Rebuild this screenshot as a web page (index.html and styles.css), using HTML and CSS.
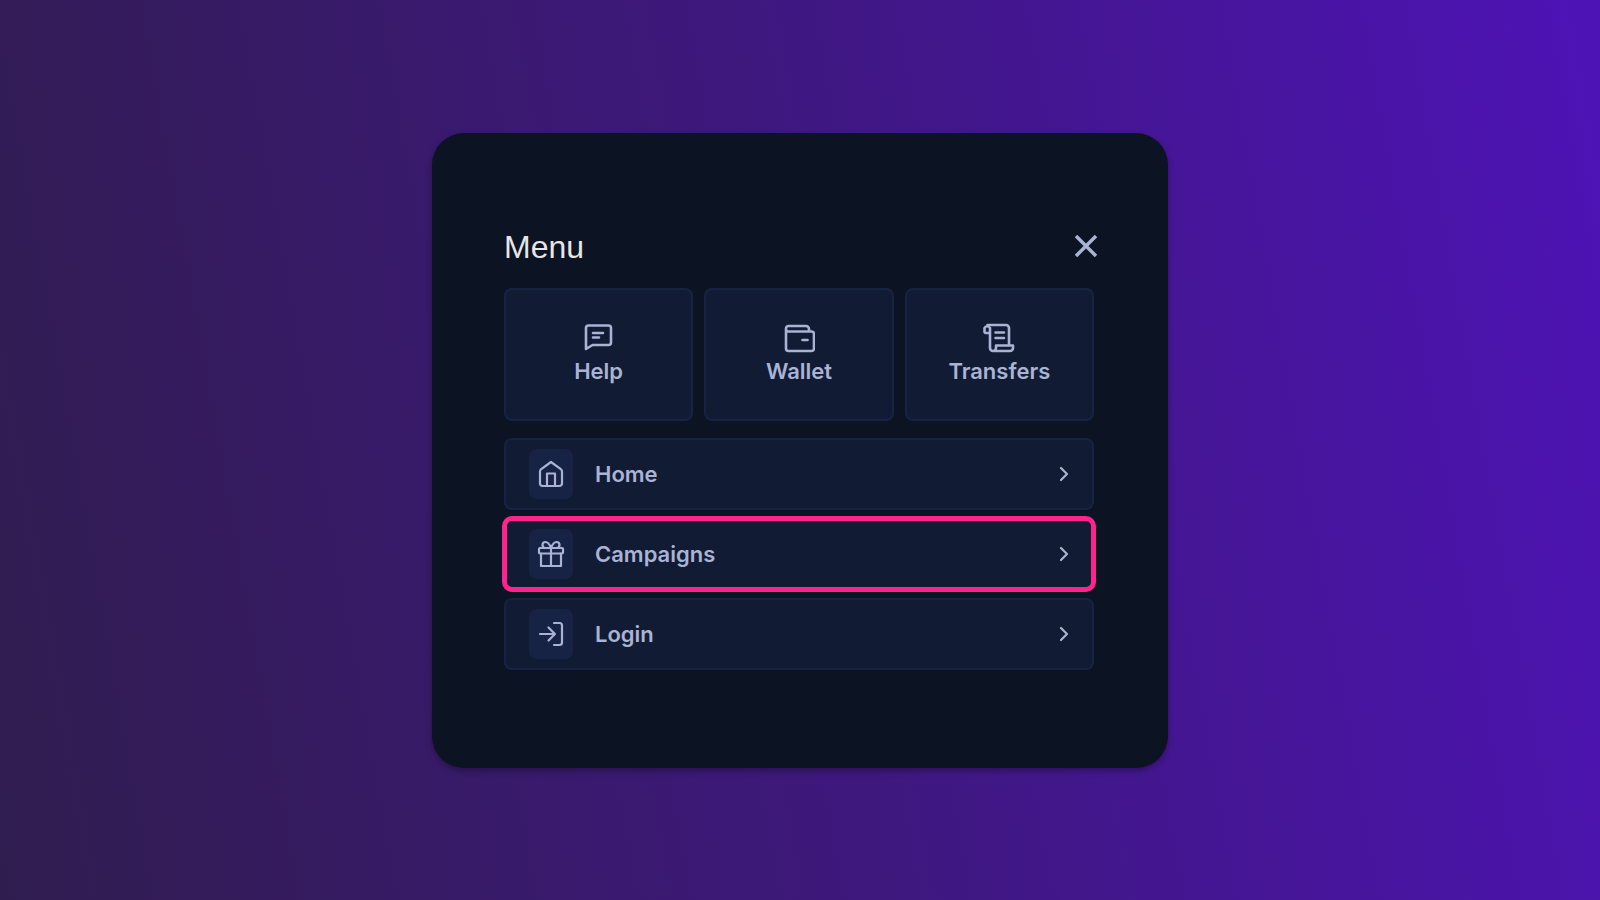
FILE: index.html
```html
<!DOCTYPE html>
<html lang="en">
<head>
    <meta charset="UTF-8">
    <meta name="viewport" content="width=device-width, initial-scale=1.0">
    <title>Menu</title>
    <link rel="stylesheet" href="styles.css">
</head>
<body>
    <main class="menu-card">
        <header class="menu-header">
            <h1>Menu</h1>
            <button class="close-btn" type="button" aria-label="Close menu">
                <svg class="close-icon" viewBox="0 0 24 24"><path d="M2 1l20 20M22 1L2 21"/></svg>
            </button>
        </header>

        <div class="tiles">
            <a class="tile" href="#help">
                <svg class="icon tile-icon" viewBox="0 0 32 32"><path d="M3 27V6a2.500 2.500 0 0 1 2.500-2.500h20A2.500 2.500 0 0 1 28 6v14.500a2.500 2.500 0 0 1-2.500 2.500H9.500z"/><path d="M10 11h10M10 15.500h6"/></svg>
                <span>Help</span>
            </a>
            <a class="tile" href="#wallet">
                <svg class="icon tile-icon" viewBox="0 0 32 32"><path d="M26 9.500V7a3 3 0 0 0-3-3H5.500A2.500 2.500 0 0 0 3 6.500v20A2.500 2.500 0 0 0 5.500 29h23a2.500 2.500 0 0 0 2.500-2.500V12a2.500 2.500 0 0 0-2.500-2.500H5.500A2.500 2.500 0 0 1 3 7"/><path d="M19.500 18h5"/></svg>
                <span>Wallet</span>
            </a>
            <a class="tile" href="#transfers">
                <svg class="icon tile-icon" viewBox="0 0 32 32"><path d="M6 11H3a1.500 1.500 0 0 1-1.500-1.500V6A3 3 0 0 1 7 6v20a3 3 0 0 0 3 3h17a3 3 0 0 0 3-3v-2.500H13V26a3 3 0 0 1-3 3"/><path d="M4.500 3H23a3 3 0 0 1 3 3v17"/><path d="M12.500 10.500h8.500M12.500 16h8.500"/></svg>
                <span>Transfers</span>
            </a>
        </div>

        <nav class="links">
            <a class="link" href="#home">
                <span class="link-badge">
                    <svg class="icon link-icon" viewBox="0 0 28 28"><path d="M3 11.500c0-1 .4-1.700 1.200-2.300L14 2l9.800 7.200c.8.600 1.200 1.300 1.200 2.300V23.500a2.500 2.500 0 0 1-2.500 2.500h-17A2.500 2.500 0 0 1 3 23.500z"/><path d="M10 25.500V13.500h8v12"/></svg>
                </span>
                <span class="link-label">Home</span>
                <svg class="icon chevron" viewBox="0 0 16 16"><path d="M5 2l6 6-6 6"/></svg>
            </a>
            <a class="link active" href="#campaigns">
                <span class="link-badge">
                    <svg class="icon link-icon" viewBox="0 0 28 28"><rect x="2" y="8" width="24" height="5.500" rx="1"/><path d="M4 13.500V26h20V13.500M14 8v18M14 8C12.500 4 11 2 8.500 2a3 3 0 0 0 0 6M14 8c1.500-4 3-6 5.500-6a3 3 0 0 1 0 6"/></svg>
                </span>
                <span class="link-label">Campaigns</span>
                <svg class="icon chevron" viewBox="0 0 16 16"><path d="M5 2l6 6-6 6"/></svg>
            </a>
            <a class="link" href="#login">
                <span class="link-badge">
                    <svg class="icon link-icon" viewBox="0 0 28 28"><path d="M17 3h5.500A2.500 2.500 0 0 1 25 5.500v17a2.500 2.500 0 0 1-2.500 2.500H17"/><path d="M3 14h15M11.500 7.500L18 14l-6.500 6.500"/></svg>
                </span>
                <span class="link-label">Login</span>
                <svg class="icon chevron" viewBox="0 0 16 16"><path d="M5 2l6 6-6 6"/></svg>
            </a>
        </nav>
    </main>
</body>
</html>
```
FILE: styles.css
```css
* {
    box-sizing: border-box;
}
body {
    margin: 0;
    min-height: 100vh;
    display: flex;
    align-items: center;
    justify-content: center;
    font-family: Inter, "Liberation Sans", sans-serif;
    color: #a9b3d3;
    background: linear-gradient(80deg, #301d4f, #3e187d 50%, #4e13b6);
}
.menu-card {
    width: 100%;
    max-width: 736px;
    padding: 92px 74px 98px 72px;
    border-radius: 32px;
    background: #0c1323;
    box-shadow: 0 3px 6px rgba(0, 0, 0, 0.3);
}
.menu-header {
    display: flex;
    align-items: center;
    justify-content: space-between;
    height: 44px;
    margin-bottom: 19px;
}
h1 {
    margin: 0;
    font-family: "Liberation Sans", Arial, sans-serif;
    font-size: 32px;
    font-weight: 400;
    line-height: 44px;
    color: #e6e6e6;
}
.close-btn {
    display: flex;
    margin-right: -4px;
    padding: 0;
    border: 0;
    background: none;
    color: inherit;
    cursor: pointer;
}
.close-icon {
    width: 24px;
    height: 24px;
    fill: none;
    stroke: currentColor;
    stroke-width: 3.5;
}
.icon {
    fill: none;
    stroke: currentColor;
    stroke-width: 2.2;
    stroke-linecap: round;
    stroke-linejoin: round;
}
.tiles {
    display: grid;
    grid-template-columns: repeat(3, 1fr);
    gap: 11px;
    margin-bottom: 17px;
}
.tile {
    display: flex;
    flex-direction: column;
    align-items: center;
    gap: 3px;
    height: 133px;
    padding-top: 32px;
    border: 2px solid #172344;
    border-radius: 8px;
    background: #121b34;
    color: inherit;
    font-size: 22px;
    font-weight: 600;
    line-height: 28px;
    text-decoration: none;
}
.tile-icon {
    width: 32px;
    height: 32px;
    stroke-width: 2.6;
}
.links {
    display: flex;
    flex-direction: column;
    gap: 8px;
}
.link {
    display: flex;
    align-items: center;
    height: 72px;
    padding: 0 20px 0 23px;
    border: 2px solid #172344;
    border-radius: 8px;
    background: #121b34;
    color: inherit;
    font-size: 22px;
    font-weight: 600;
    line-height: 28px;
    text-decoration: none;
}
.link.active {
    outline: 5px solid #ff238c;
    outline-offset: -3px;
}
.link-badge {
    display: flex;
    align-items: center;
    justify-content: center;
    width: 44px;
    height: 50px;
    margin-right: 22px;
    border-radius: 8px;
    background: #172344;
}
.link-icon {
    width: 28px;
    height: 28px;
}
.link-label {
    flex: 1;
}
.chevron {
    width: 16px;
    height: 16px;
}
```
